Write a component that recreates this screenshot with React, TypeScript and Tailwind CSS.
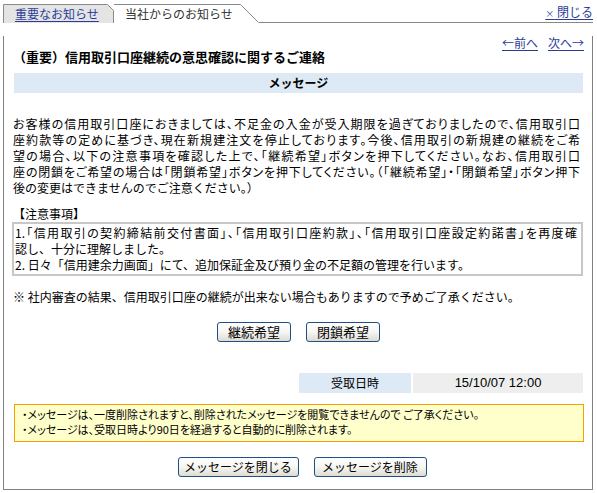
import React from "react";

const FONT = "font-['Noto_Sans_CJK_JP','Noto_Sans',sans-serif]";

function Btn({ children, className }: { children: React.ReactNode; className: string }) {
  return (
    <button
      className={`h-[20px] rounded-[3px] border border-[#1d4f8a] bg-linear-to-b from-white via-[#f6f6f2] to-[#dedbd2] leading-[18px] text-black ${className}`}
    >
      {children}
    </button>
  );
}

function JLine({ children }: { children: React.ReactNode }) {
  return (
    <div className="text-justify [text-align-last:justify] [font-feature-settings:'palt'] [text-justify:inter-character]">
      {children}
    </div>
  );
}

export default function App() {
  return (
    <div lang="ja" className={`${FONT} w-[597px] h-[493px] bg-white text-black pl-[3px] pr-[4px] pt-[4px]`}>
      {/* tab strip */}
      <div className="flex h-[19px]">
        <div className="relative w-[111px] h-[19px] shrink-0">
          <svg className="absolute inset-0" width="111" height="19" viewBox="0 0 111 19">
            <path d="M0 0 H104.5 L110.5 6 V19 H0 Z" fill="#e4e4e4" />
            <path d="M0.5 19 V0.5 H104.5 L110.5 6.5 V19" fill="none" stroke="#8a8a8a" strokeWidth="1" />
          </svg>
          <span className="relative block pl-[12px] text-[12px] leading-[19px] text-[#2a3c98] underline underline-offset-[2px]">
            重要なお知らせ
          </span>
        </div>
        <div className="relative w-[145px] h-[19px] shrink-0">
          <svg className="absolute inset-0" width="145" height="19" viewBox="0 0 145 19">
            <path d="M0 0.5 H126.5 L144.5 18.5" fill="none" stroke="#8a8a8a" strokeWidth="1" />
          </svg>
          <span className="relative block pl-[11px] text-[12px] leading-[19px] text-[#333]">
            当社からのお知らせ
          </span>
        </div>
        <div className="flex-1 border-b border-[#888] flex justify-end items-start">
          <a className="text-[12px] leading-[14px] mt-[1px] text-[#2a3c98] underline underline-offset-[2px]">
            <span className="text-[9px]">×</span> 閉じる
          </a>
        </div>
      </div>

      {/* panel */}
      <div className="border-x border-b border-[#808080] pl-[10px] pr-[9px] pb-[12px]">
        <div className="flex justify-end gap-[10px] mt-[13px] -mr-[1px] text-[12px] leading-[14px] text-[#2a3c98]">
          <a className="underline underline-offset-[2px]">←前へ</a>
          <a className="underline underline-offset-[2px]">次へ→</a>
        </div>
        <div className="text-[13px] font-bold leading-[14px] -ml-[1px]">
          （重要）信用取引口座継続の意思確認に関するご連絡
        </div>
        <div className="mt-[9px] h-[20px] bg-[#dde9f4] text-center text-[12px] font-bold leading-[20px]">
          メッセージ
        </div>

        <div className="mt-[23px] text-[12px] leading-[16px] -ml-[1px] pr-[3px]">
          <JLine>お客様の信用取引口座におきましては、不足金の入金が受入期限を過ぎておりましたので、信用取引口</JLine>
          <JLine>座約款等の定めに基づき、現在新規建注文を停止しております。今後、信用取引の新規建の継続をご希</JLine>
          <JLine>望の場合、以下の注意事項を確認した上で、「継続希望」ボタンを押下してください。なお、信用取引口</JLine>
          <JLine>座の閉鎖をご希望の場合は「閉鎖希望」ボタンを押下してください。（「継続希望」・「閉鎖希望」ボタン押下</JLine>
          <div>後の変更はできませんのでご注意ください。）</div>
        </div>

        <div className="mt-[10px] text-[12px] leading-[16px] -ml-[1px]">【注意事項】</div>
        <div className="border-2 border-[#c8c8c8] pt-[1px] pb-[1px] pl-[1px] pr-[4px] text-[12px] leading-[16px] -ml-[2px]">
          <JLine>1.「信用取引の契約締結前交付書面」、「信用取引口座約款」、「信用取引口座設定約諾書」を再度確</JLine>
          <div>認し、十分に理解しました。</div>
          <div>2. 日々「信用建余力画面」にて、追加保証金及び預り金の不足額の管理を行います。</div>
        </div>

        <div className="mt-[13px] text-[12px] leading-[16px] -ml-[1px]">
          ※ 社内審査の結果、信用取引口座の継続が出来ない場合もありますので予めご了承ください。
        </div>

        <div className="mt-[17px] flex justify-center gap-[15px]">
          <Btn className="w-[74px] text-[13px]">継続希望</Btn>
          <Btn className="w-[74px] text-[13px]">閉鎖希望</Btn>
        </div>

        <div className="mt-[31px] flex justify-end gap-[2px] text-[12px] leading-[20px]">
          <div className="w-[112px] h-[20px] bg-[#dde9f4] text-center">受取日時</div>
          <div className="w-[170px] h-[20px] bg-[#eeeeee] text-center font-['Liberation_Sans','Noto_Sans_CJK_JP',sans-serif] text-[13px]">
            15/10/07 12:00
          </div>
        </div>

        <div className="mt-[11px] -mr-[1px] border border-[#f5a000] bg-[#ffffcc] pl-[7px] pt-[2px] pb-[4px] text-[11px] leading-[15px] [font-feature-settings:'palt']">
          <div>・メッセージは、一度削除されますと、削除されたメッセージを閲覧できませんので ご了承ください。</div>
          <div>・メッセージは、受取日時より90日を経過すると自動的に削除されます。</div>
        </div>

        <div className="mt-[15px] ml-[7px] flex justify-center gap-[15px]">
          <Btn className="w-[121px] text-[12px]">メッセージを閉じる</Btn>
          <Btn className="w-[113px] text-[12px]">メッセージを削除</Btn>
        </div>
      </div>
    </div>
  );
}
